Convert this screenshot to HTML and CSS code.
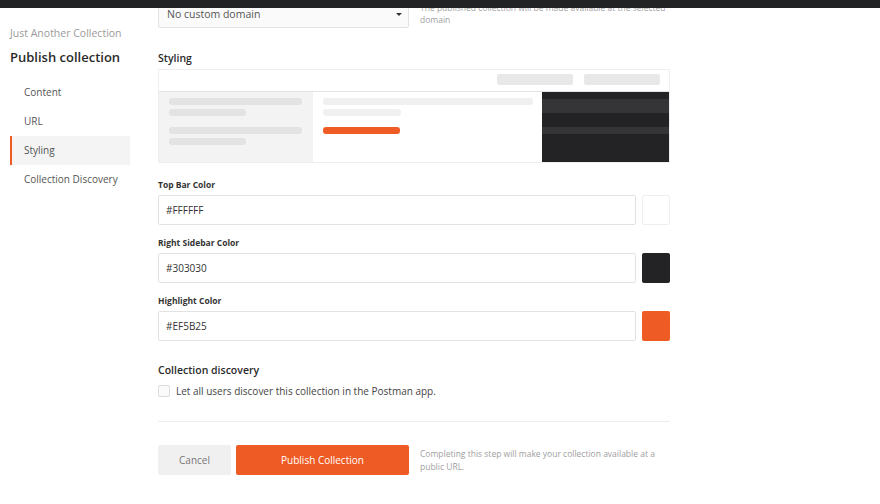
FILE: index.html
```html
<!DOCTYPE html>
<html>
<head>
<meta charset="utf-8">
<link rel="stylesheet" href="styles.css">
</head>
<body>
<div class="topbar"></div>
<div class="layout">
  <aside class="sidebar">
    <div class="crumb">Just Another Collection</div>
    <h1 class="title">Publish collection</h1>
    <nav class="nav">
      <div class="nav-item">Content</div>
      <div class="nav-item">URL</div>
      <div class="nav-item active">Styling</div>
      <div class="nav-item">Collection Discovery</div>
    </nav>
  </aside>
  <main class="main">
    <div class="domain-row">
      <div class="select">
        <span>No custom domain</span>
        <span class="caret"></span>
      </div>
      <div class="help">The published collection will be made available at the selected domain</div>
    </div>

    <div class="section-title styling-title">Styling</div>
    <div class="preview">
      <div class="pv-top">
        <span class="pill"></span>
        <span class="pill"></span>
      </div>
      <div class="pv-body">
        <div class="pv-left">
          <div class="ln ln-l1"></div>
          <div class="ln ln-l2"></div>
          <div class="ln ln-l1 gap"></div>
          <div class="ln ln-l2"></div>
        </div>
        <div class="pv-mid">
          <div class="ln ln-m1"></div>
          <div class="ln ln-m2"></div>
          <div class="ln ln-or"></div>
        </div>
        <div class="pv-right">
          <div class="st st1"></div>
          <div class="st st2"></div>
        </div>
      </div>
    </div>

    <div class="field">
      <label class="field-label">Top Bar Color</label>
      <div class="field-row">
        <div class="input">#FFFFFF</div>
        <div class="swatch sw-white"></div>
      </div>
    </div>
    <div class="field">
      <label class="field-label">Right Sidebar Color</label>
      <div class="field-row">
        <div class="input">#303030</div>
        <div class="swatch sw-dark"></div>
      </div>
    </div>
    <div class="field">
      <label class="field-label">Highlight Color</label>
      <div class="field-row">
        <div class="input">#EF5B25</div>
        <div class="swatch sw-orange"></div>
      </div>
    </div>

    <div class="section-title disc-title">Collection discovery</div>
    <div class="check-row">
      <span class="checkbox"></span>
      <span>Let all users discover this collection in the Postman app.</span>
    </div>

    <div class="divider"></div>

    <div class="actions">
      <button class="btn btn-cancel">Cancel</button>
      <button class="btn btn-primary">Publish Collection</button>
      <div class="action-help">Completing this step will make your collection available at a public URL.</div>
    </div>
  </main>
</div>
</body>
</html>
```
FILE: styles.css
```css
* { box-sizing: border-box; }
html, body { margin: 0; padding: 0; background: #fff; }
body {
  font-family: "Open Sans", "Noto Sans", sans-serif;
  color: #333;
  width: 880px;
  height: 504px;
  overflow: hidden;
  position: relative;
}
.topbar {
  position: absolute;
  top: 0; left: 0; right: 0;
  height: 8px;
  background: #222325;
  z-index: 5;
}
.layout {
  display: flex;
  gap: 28px;
  padding-left: 10px;
}
.sidebar {
  width: 120px;
  flex: none;
  padding-top: 26px;
}
.crumb {
  font-size: 10.5px;
  line-height: 14px;
  color: #9a9a9a;
}
.title {
  margin: 8px 0 0;
  font-size: 13px;
  line-height: 18px;
  font-weight: 600;
  color: #2b2b2b;
}
.nav { margin-top: 12px; display: flex; flex-direction: column; }
.nav-item {
  height: 29px;
  line-height: 29px;
  padding-left: 12px;
  font-size: 10px;
  color: #555;
  border-left: 2px solid transparent;
}
.nav-item.active {
  background: #f4f4f4;
  border-left-color: #ef5b25;
}
.main {
  width: 512px;
  flex: none;
}
.domain-row {
  display: flex;
  gap: 11px;
  height: 28px;
}
.select {
  width: 251px;
  height: 28px;
  background: #fafafa;
  border: 1px solid #e2e2e2;
  border-radius: 2px;
  display: flex;
  align-items: center;
  justify-content: space-between;
  padding: 0 6px 0 8px;
  font-size: 10.5px;
  color: #555;
}
.caret {
  width: 0; height: 0;
  border-left: 3px solid transparent;
  border-right: 3px solid transparent;
  border-top: 3px solid #333;
}
.help {
  font-size: 8.5px;
  line-height: 12px;
  color: #a0a0a0;
  padding-top: 2px;
  width: 250px;
}
.section-title {
  font-size: 10.5px;
  font-weight: 600;
  color: #2b2b2b;
  line-height: 14px;
}
.styling-title { margin-top: 23px; }
.preview {
  margin-top: 4px;
  height: 94px;
  border: 1px solid #eeeeee;
  display: flex;
  flex-direction: column;
}
.pv-top {
  height: 22px;
  flex: none;
  background: #fff;
  border-bottom: 1px solid #e4e4e4;
  display: flex;
  justify-content: flex-end;
  align-items: flex-start;
  gap: 11px;
  padding: 4px 9px 0 0;
}
.pill {
  width: 76px;
  height: 11px;
  background: #e8e8e8;
  border-radius: 2px;
}
.pv-body { flex: 1; display: flex; }
.pv-left {
  width: 154px;
  background: #f3f3f3;
  padding: 6px 0 0 10px;
}
.pv-mid {
  flex: 1;
  padding: 6px 0 0 10px;
}
.pv-right {
  width: 127px;
  background: #232325;
  padding-top: 7px;
}
.ln { height: 7px; border-radius: 3px; margin-bottom: 4px; }
.pv-left .ln { background: #e3e3e3; }
.ln-l1 { width: 133px; }
.ln-l2 { width: 77px; }
.ln.gap { margin-top: 11px; }
.ln-m1 { width: 210px; background: #f0f0f0; }
.ln-m2 { width: 78px; background: #f0f0f0; }
.ln-or { width: 77px; background: #ef5b25; margin-top: 11px; }
.st { background: #353537; }
.st1 { height: 14px; }
.st2 { height: 7px; margin-top: 14px; }
.field { margin-top: 16px; }
.field + .field { margin-top: 12px; }
.field-label {
  display: block;
  font-size: 8.5px;
  font-weight: 700;
  line-height: 12px;
  color: #333;
}
.field-row {
  margin-top: 4px;
  display: grid;
  grid-template-columns: 1fr 28px;
  gap: 6px;
}
.input {
  height: 30px;
  border: 1px solid #e2e2e2;
  border-radius: 2px;
  padding-left: 7px;
  display: flex;
  align-items: center;
  font-size: 10px;
  color: #333;
}
.swatch {
  height: 30px;
  border-radius: 2px;
}
.sw-white { border: 1px solid #efefef; background: #fff; }
.sw-dark { background: #232325; }
.sw-orange { background: #ef5b25; }
.disc-title { margin-top: 22px; line-height: 14px; }
.check-row {
  margin-top: 7px;
  display: flex;
  align-items: center;
  gap: 6px;
  font-size: 10px;
  color: #444;
  height: 14px;
}
.checkbox {
  width: 12px;
  height: 12px;
  border: 1px solid #dcdcdc;
  background: #fafafa;
  border-radius: 2px;
}
.divider {
  margin-top: 23px;
  height: 1px;
  background: #eeeeee;
}
.actions {
  margin-top: 23px;
  display: flex;
  align-items: center;
}
.btn {
  height: 30px;
  border: none;
  border-radius: 2px;
  font-family: "Open Sans", "Noto Sans", sans-serif;
  font-size: 10px;
  padding: 0;
}
.btn-cancel {
  width: 73px;
  background: #f0f0f0;
  color: #777;
}
.btn-primary {
  width: 173px;
  margin-left: 5px;
  background: #ef5b25;
  color: #fff;
}
.action-help {
  margin-left: 11px;
  font-size: 8.5px;
  line-height: 13px;
  color: #a0a0a0;
  width: 250px;
}
```
